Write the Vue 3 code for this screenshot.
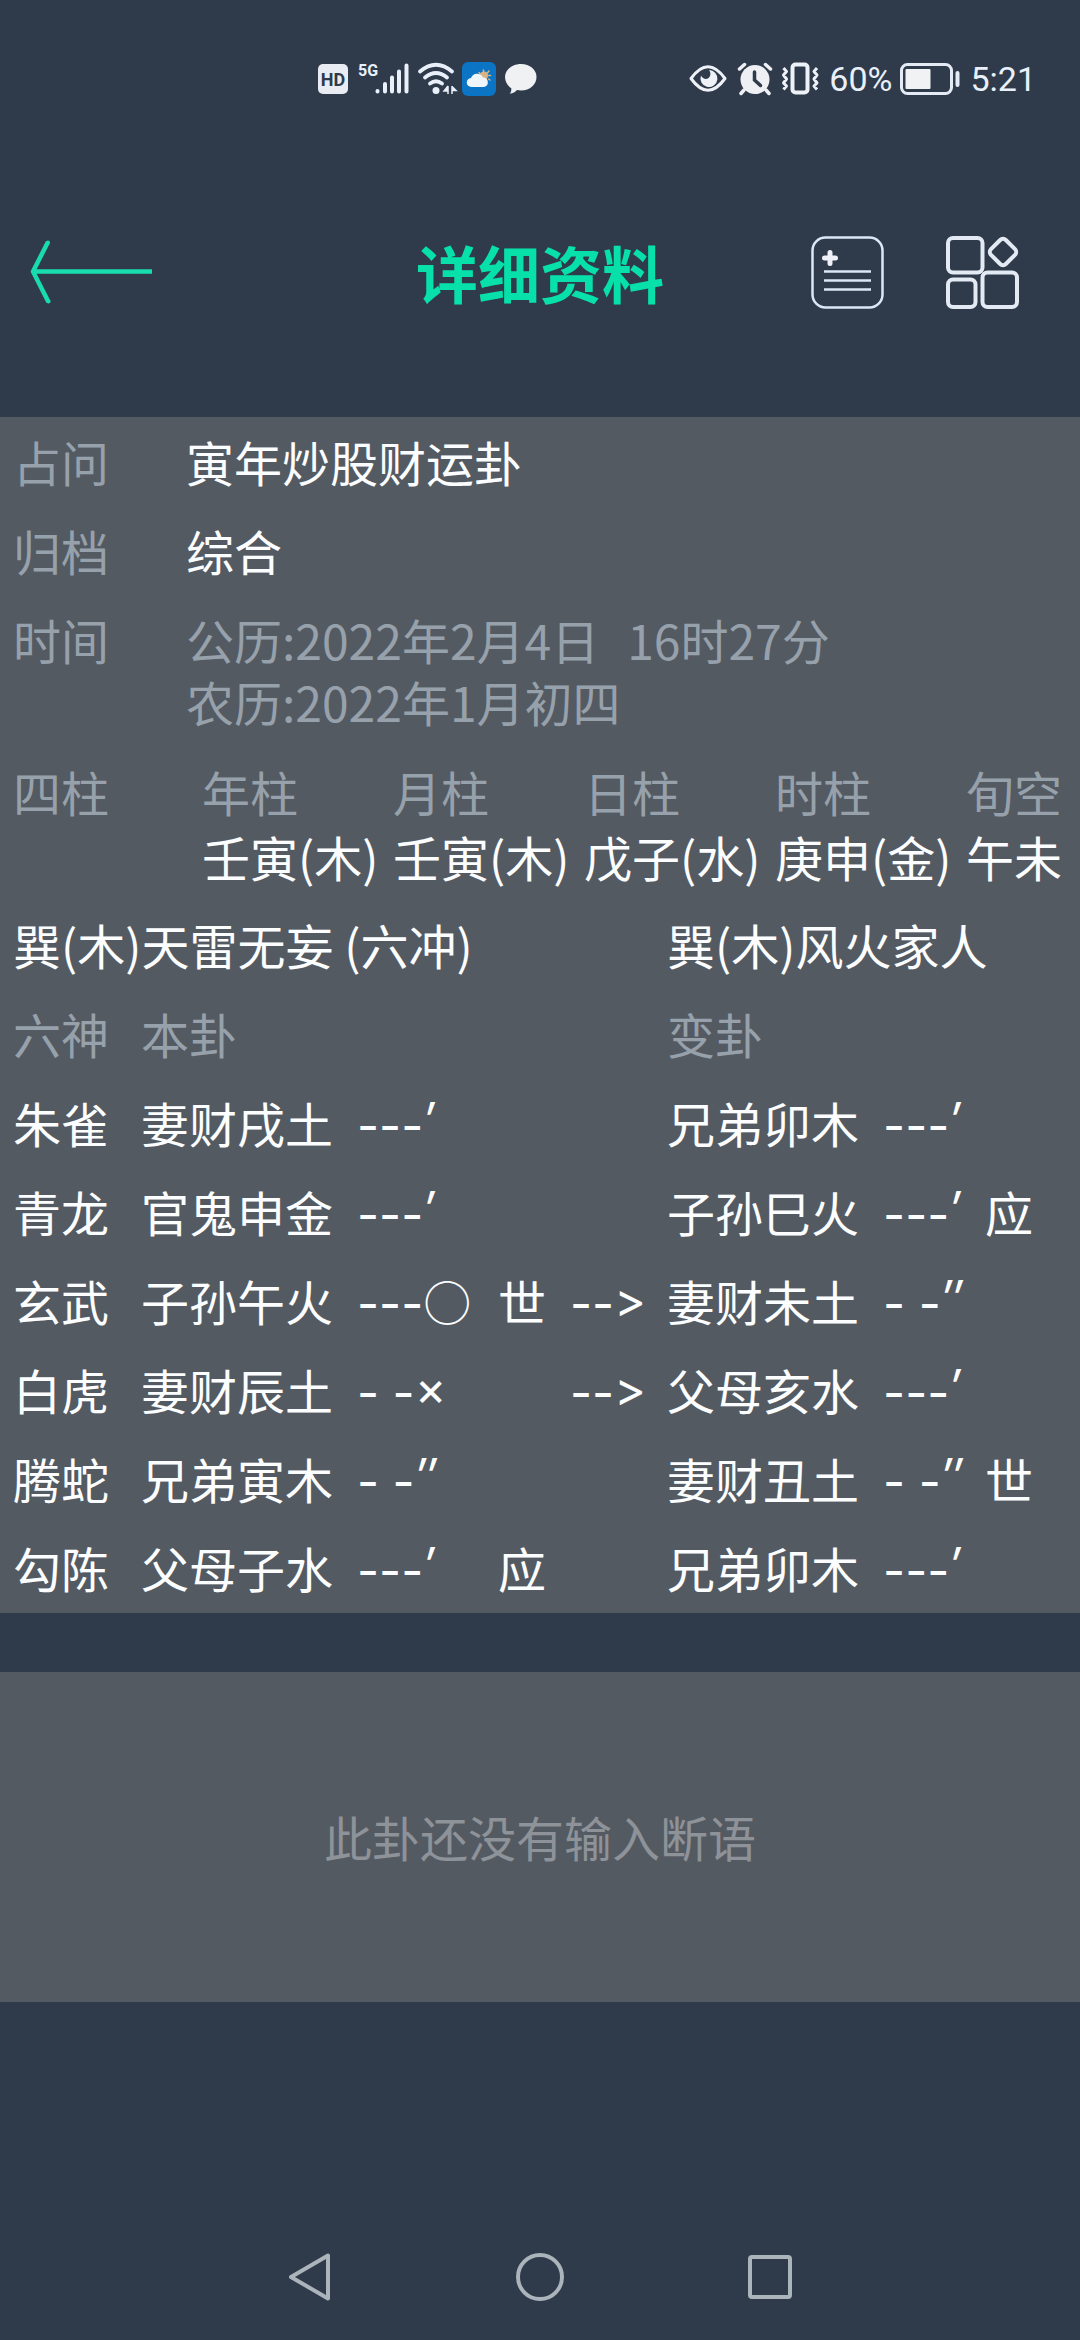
<script setup>
const pillars = [
  { name: '年柱', value: '壬寅(木)' },
  { name: '月柱', value: '壬寅(木)' },
  { name: '日柱', value: '戊子(水)' },
  { name: '时柱', value: '庚申(金)' },
  { name: '旬空', value: '午未' },
]

const lines = [
  { spirit: '朱雀', base: '妻财戌土', bar: '---', sign: '′', role: '', moving: false, to: '兄弟卯木', toBar: '---', toSign: '′', toRole: '' },
  { spirit: '青龙', base: '官鬼申金', bar: '---', sign: '′', role: '', moving: false, to: '子孙巳火', toBar: '---', toSign: '′', toRole: '应' },
  { spirit: '玄武', base: '子孙午火', bar: '---', sign: '○', role: '世', moving: true, to: '妻财未土', toBar: '- -', toSign: '″', toRole: '' },
  { spirit: '白虎', base: '妻财辰土', bar: '- -', sign: '×', role: '', moving: true, to: '父母亥水', toBar: '---', toSign: '′', toRole: '' },
  { spirit: '腾蛇', base: '兄弟寅木', bar: '- -', sign: '″', role: '', moving: false, to: '妻财丑土', toBar: '- -', toSign: '″', toRole: '世' },
  { spirit: '勾陈', base: '父母子水', bar: '---', sign: '′', role: '应', moving: false, to: '兄弟卯木', toBar: '---', toSign: '′', toRole: '' },
]

const signClass = (sign) => {
  if (sign === '○') return 'ring'
  return sign === '×' ? 'raised' : 'prime'
}
</script>

<template>
  <div class="page">
    <div class="status">
      <div class="status-group">
        <svg width="32" height="34" viewBox="0 0 32 34" aria-label="HD">
          <rect x="0" y="2" width="30" height="30" rx="5" fill="#e9ecf2" />
          <text x="15" y="24" text-anchor="middle" class="hd">HD</text>
        </svg>
        <svg width="52" height="34" viewBox="0 0 52 34" aria-label="5G">
          <text x="0" y="14" class="net">5G</text>
          <g stroke="#e9f0fa" stroke-width="4" stroke-linecap="round">
            <path d="M19.5 29v0.500M27 22v7.500M34 15.500v14M41 9.500v20M48.500 3.500v26" />
          </g>
        </svg>
        <svg width="36" height="34" viewBox="0 0 36 34" overflow="visible" aria-label="Wi-Fi">
          <g fill="none" stroke="#e9f0fa" stroke-width="3.800" stroke-linecap="round">
            <path d="M2 9.500Q18 -4 34 9.500" />
            <path d="M7 15.500Q18 6.500 29 15.500" />
            <path d="M12 21.500Q18 17 24 21.500" />
          </g>
          <circle cx="18" cy="28.500" r="3.500" fill="#e9f0fa" />
          <path d="M30 24v8M30 24l-4 5h4M34 32v-8M34 24.500l4 4h-4" fill="#e9f0fa" stroke="#e9f0fa" stroke-width="1.500" />
        </svg>
        <svg width="34" height="34" viewBox="0 0 34 34" aria-label="天气">
          <rect width="34" height="34" rx="6" fill="#0b74c4" />
          <g stroke="#d9b483" stroke-width="1.500" stroke-linecap="round">
            <path d="M21.500 8v2M17 10.500l1.500 1.500M27 9l-1.500 1.800M28.500 13.500h-1.800M28 18l-1.500-1" />
          </g>
          <circle cx="22" cy="13.500" r="4" fill="#d9b483" />
          <path d="M9.500 25a4.500 4.500 0 0 1-.500-9 6.500 6.500 0 0 1 12-.5 4.800 4.800 0 0 1 1 9.500z" fill="#f1f6fc" />
        </svg>
        <svg width="34" height="34" viewBox="0 0 34 34" aria-label="消息">
          <path d="M17 2c9 0 15.500 5.800 15.500 13S26 28.500 17 28.500c-1.500 0-2.800-.2-4-.5-1.500 1.800-4 3.500-7.500 3.800 1.500-1.500 2-3.500 1.800-5.500C3.700 23.800 1 19.800 1 15 1 7.800 8 2 17 2z" fill="#f0f1f3" />
        </svg>
      </div>
      <div class="status-group">
        <svg width="40" height="34" viewBox="0 0 40 34" aria-hidden="true">
          <path d="M2 16.500Q19 -7 36 16.500Q19 40 2 16.500z" fill="none" stroke="#eef2f8" stroke-width="3" stroke-linejoin="round" />
          <path d="M20 8a8.500 8.500 0 1 1-8 5.500c1.500 3 5 4.500 7.500 2.500s2.500-5.500.5-8z" fill="#eef2f8" />
        </svg>
        <svg width="36" height="34" viewBox="0 0 36 34" aria-hidden="true">
          <circle cx="18" cy="17.500" r="14.500" fill="#eef0f4" />
          <path d="M2.500 7l5-4.500M33.500 7l-5-4.500M7 28l-3 3.500M29 28l3 3.500" stroke="#eef0f4" stroke-width="3.500" stroke-linecap="round" />
          <path d="M17.500 10v8l6 5.500" fill="none" stroke="#2f3b4b" stroke-width="3.500" stroke-linecap="round" />
        </svg>
        <svg width="40" height="34" viewBox="0 0 40 34" aria-hidden="true">
          <rect x="11.500" y="2.500" width="15" height="28" rx="3" fill="none" stroke="#eef2f8" stroke-width="4" />
          <path d="M2.500 6l3 3.500-3 3.500 3 4-3 4 3 3-3 3.500M36 6l-3 3.500 3 3.500-3 4 3 4-3 3 3 3.500" fill="none" stroke="#eef2f8" stroke-width="3" stroke-linejoin="round" />
        </svg>
        <span>60%</span>
        <svg width="62" height="34" viewBox="0 0 62 34" aria-hidden="true">
          <rect x="1.500" y="2.500" width="50" height="29" rx="6" fill="none" stroke="#e4ebf5" stroke-width="3" />
          <rect x="5.500" y="7" width="25" height="20" rx="1" fill="#f1f2f4" />
          <rect x="55.500" y="9" width="4" height="16" rx="2" fill="#e4ebf5" />
        </svg>
        <span>5:21</span>
      </div>
    </div>

    <header class="header">
      <button class="icon-button back" type="button" aria-label="返回">
        <svg width="120" height="73" viewBox="0 0 120 73" overflow="visible">
          <path d="M120 35.500H1M16 6L1 35.500L16.500 66" fill="none" stroke="#18dcae" stroke-width="4.500" stroke-linejoin="round" />
          <circle cx="16" cy="6.500" r="2" fill="#18dcae" />
          <circle cx="16.500" cy="65.500" r="2" fill="#18dcae" />
        </svg>
      </button>
      <h1 class="title">详细资料</h1>
      <div class="actions">
        <button class="icon-button" type="button" aria-label="断语">
          <svg width="73" height="73" viewBox="0 0 73 73">
            <rect x="1.500" y="1.500" width="70" height="70" rx="13" fill="none" stroke="#dce7f5" stroke-width="2.500" />
            <path d="M19 16.500v11M13.500 22h11" stroke="#eef1f7" stroke-width="5" stroke-linecap="round" />
            <path d="M13 35.500h47M13 44.500h47M13 53.500h47" stroke="#dce7f5" stroke-width="2.500" />
          </svg>
        </button>
        <button class="icon-button" type="button" aria-label="更多">
          <svg width="73" height="73" viewBox="0 0 73 73">
            <g fill="none" stroke="#e4eaf4" stroke-width="4">
              <rect x="2" y="2" width="34.500" height="34.500" rx="5" />
              <rect x="2" y="43.500" width="27.500" height="27.500" rx="5" />
              <rect x="36.500" y="36.500" width="34.500" height="34.500" rx="5" />
              <rect x="46.500" y="5.500" width="21" height="21" rx="4" transform="rotate(45 57 16)" />
            </g>
          </svg>
        </button>
      </div>
    </header>

    <main>
      <section class="panel detail">
        <dl class="info">
          <div class="info-row">
            <dt>占问</dt>
            <dd class="strong">寅年炒股财运卦</dd>
          </div>
          <div class="info-row">
            <dt>归档</dt>
            <dd class="strong">综合</dd>
          </div>
          <div class="info-row">
            <dt>时间</dt>
            <dd>
              <div class="date"><span>公历:2022年2月4日</span><span>16时27分</span></div>
              <div>农历:2022年1月初四</div>
            </dd>
          </div>
          <div class="info-row pillar-row">
            <dt>四柱</dt>
            <dd>
              <table class="pillars">
                <thead>
                  <tr><th v-for="p in pillars" :key="p.name" scope="col">{{ p.name }}</th></tr>
                </thead>
                <tbody>
                  <tr><td v-for="p in pillars" :key="p.name" class="strong">{{ p.value }}</td></tr>
                </tbody>
              </table>
            </dd>
          </div>
        </dl>

        <table class="hexagram">
          <colgroup>
            <col class="c-spirit" />
            <col class="c-name" />
            <col class="c-mark" />
            <col class="c-role" />
            <col class="c-arrow" />
            <col class="c-name" />
            <col class="c-mark-to" />
            <col />
          </colgroup>
          <thead>
            <tr class="strong">
              <th colspan="5" scope="colgroup">巽(木)天雷无妄 (六冲)</th>
              <th colspan="3" scope="colgroup">巽(木)风火家人</th>
            </tr>
            <tr>
              <th scope="col">六神</th>
              <th colspan="4" scope="col">本卦</th>
              <th colspan="3" scope="col">变卦</th>
            </tr>
          </thead>
          <tbody class="strong">
            <tr v-for="line in lines" :key="line.spirit">
              <th scope="row">{{ line.spirit }}</th>
              <td>{{ line.base }}</td>
              <td class="mark">{{ line.bar }}<span :class="signClass(line.sign)">{{ line.sign }}</span></td>
              <td>{{ line.role }}</td>
              <td class="mark"><template v-if="line.moving">--<span class="raised">&gt;</span></template></td>
              <td>{{ line.to }}</td>
              <td class="mark">{{ line.toBar }}<span :class="signClass(line.toSign)">{{ line.toSign }}</span></td>
              <td>{{ line.toRole }}</td>
            </tr>
          </tbody>
        </table>
      </section>

      <section class="panel notes">
        <p>此卦还没有输入断语</p>
      </section>
    </main>

    <nav class="nav">
      <button class="icon-button" type="button" aria-label="后退">
        <svg width="48" height="50" viewBox="0 0 48 50">
          <path d="M42 3.500v43L5 25z" fill="none" stroke="#abb3bb" stroke-width="4" stroke-linejoin="round" />
        </svg>
      </button>
      <button class="icon-button" type="button" aria-label="主屏幕">
        <svg width="48" height="50" viewBox="0 0 48 50">
          <circle cx="24" cy="25" r="22" fill="none" stroke="#abb3bb" stroke-width="4" />
        </svg>
      </button>
      <button class="icon-button" type="button" aria-label="最近任务">
        <svg width="48" height="50" viewBox="0 0 48 50">
          <rect x="4" y="5" width="40" height="40" rx="2" fill="none" stroke="#abb3bb" stroke-width="4" />
        </svg>
      </button>
    </nav>
  </div>
</template>

<style>
body {
  background: #2f3b4b;
}
</style>

<style scoped>
.page {
  display: flex;
  flex-direction: column;
  min-height: 100vh;
  background: #2f3b4b;
  color: #97a1ab;
  font-family: "Noto Sans CJK SC", sans-serif;
  font-size: 48px;
  line-height: 62px;
}

.status {
  display: flex;
  justify-content: space-between;
  padding: 62px 44px 32px 318px;
  color: #e9f0fa;
  font-family: Roboto, sans-serif;
  font-size: 34px;
  line-height: 34px;
}

.status-group {
  display: flex;
  align-items: center;
  gap: 8px;
}

.hd {
  fill: #2f3b4b;
  font-family: Roboto, sans-serif;
  font-size: 18px;
  font-weight: 700;
}

.net {
  fill: #e9f0fa;
  font-family: Roboto, sans-serif;
  font-size: 16px;
  font-weight: 700;
}

.header {
  display: grid;
  grid-template-columns: 1fr auto 1fr;
  align-items: center;
  padding: 108px 32px;
}

.icon-button {
  display: flex;
  justify-content: center;
  padding: 0;
  border: 0;
  background: none;
}

.back {
  justify-self: start;
}

.title {
  margin: 0;
  color: #08e0aa;
  font-size: 62px;
  font-weight: 700;
  line-height: 73px;
}

.actions {
  display: flex;
  justify-content: flex-end;
  gap: 62px;
  padding-right: 29px;
}

.panel {
  background: #545a62;
}

.detail {
  padding: 1px 0 0 13px;
}

.info {
  margin: 0;
}

.info-row {
  display: grid;
  grid-template-columns: 173px 1fr;
  padding: 12px 0 15px;
}

dd {
  margin: 0;
}

.strong {
  color: #fbfdff;
}

.date {
  display: flex;
  gap: 28px;
}

.pillar-row {
  padding-bottom: 12px;
  line-height: 65px;
}

.pillar-row dd {
  padding-left: 16px;
}

table {
  width: 100%;
  border-spacing: 0;
  table-layout: fixed;
}

th,
td {
  padding: 0;
  font-weight: 400;
  text-align: left;
  white-space: nowrap;
}

.pillars th:not(:last-child) {
  width: 191px;
}

.hexagram th,
.hexagram td {
  padding: 12px 0 15px;
}

.c-spirit {
  width: 128px;
}

.c-name {
  width: 216px;
}

.c-mark {
  width: 141px;
}

.c-role {
  width: 72px;
}

.c-arrow {
  width: 97px;
}

.c-mark-to {
  width: 102px;
}

.hexagram .mark {
  padding: 16px 0 11px;
  font-family: Inter, "Noto Sans CJK SC", sans-serif;
  font-feature-settings: "calt" 0;
}

.mark span {
  line-height: 1;
}

.prime {
  font-style: italic;
  vertical-align: 6px;
}

.raised {
  vertical-align: 4px;
}

.ring {
  font-family: "Noto Sans CJK SC", sans-serif;
}

.notes {
  margin-top: 59px;
  padding: 133px 0 135px;
  color: #8e9299;
  text-align: center;
}

.notes p {
  margin: 0;
}

.nav {
  display: flex;
  justify-content: center;
  margin-top: auto;
  padding-bottom: 38px;
}

.nav .icon-button {
  width: 230px;
}
</style>
